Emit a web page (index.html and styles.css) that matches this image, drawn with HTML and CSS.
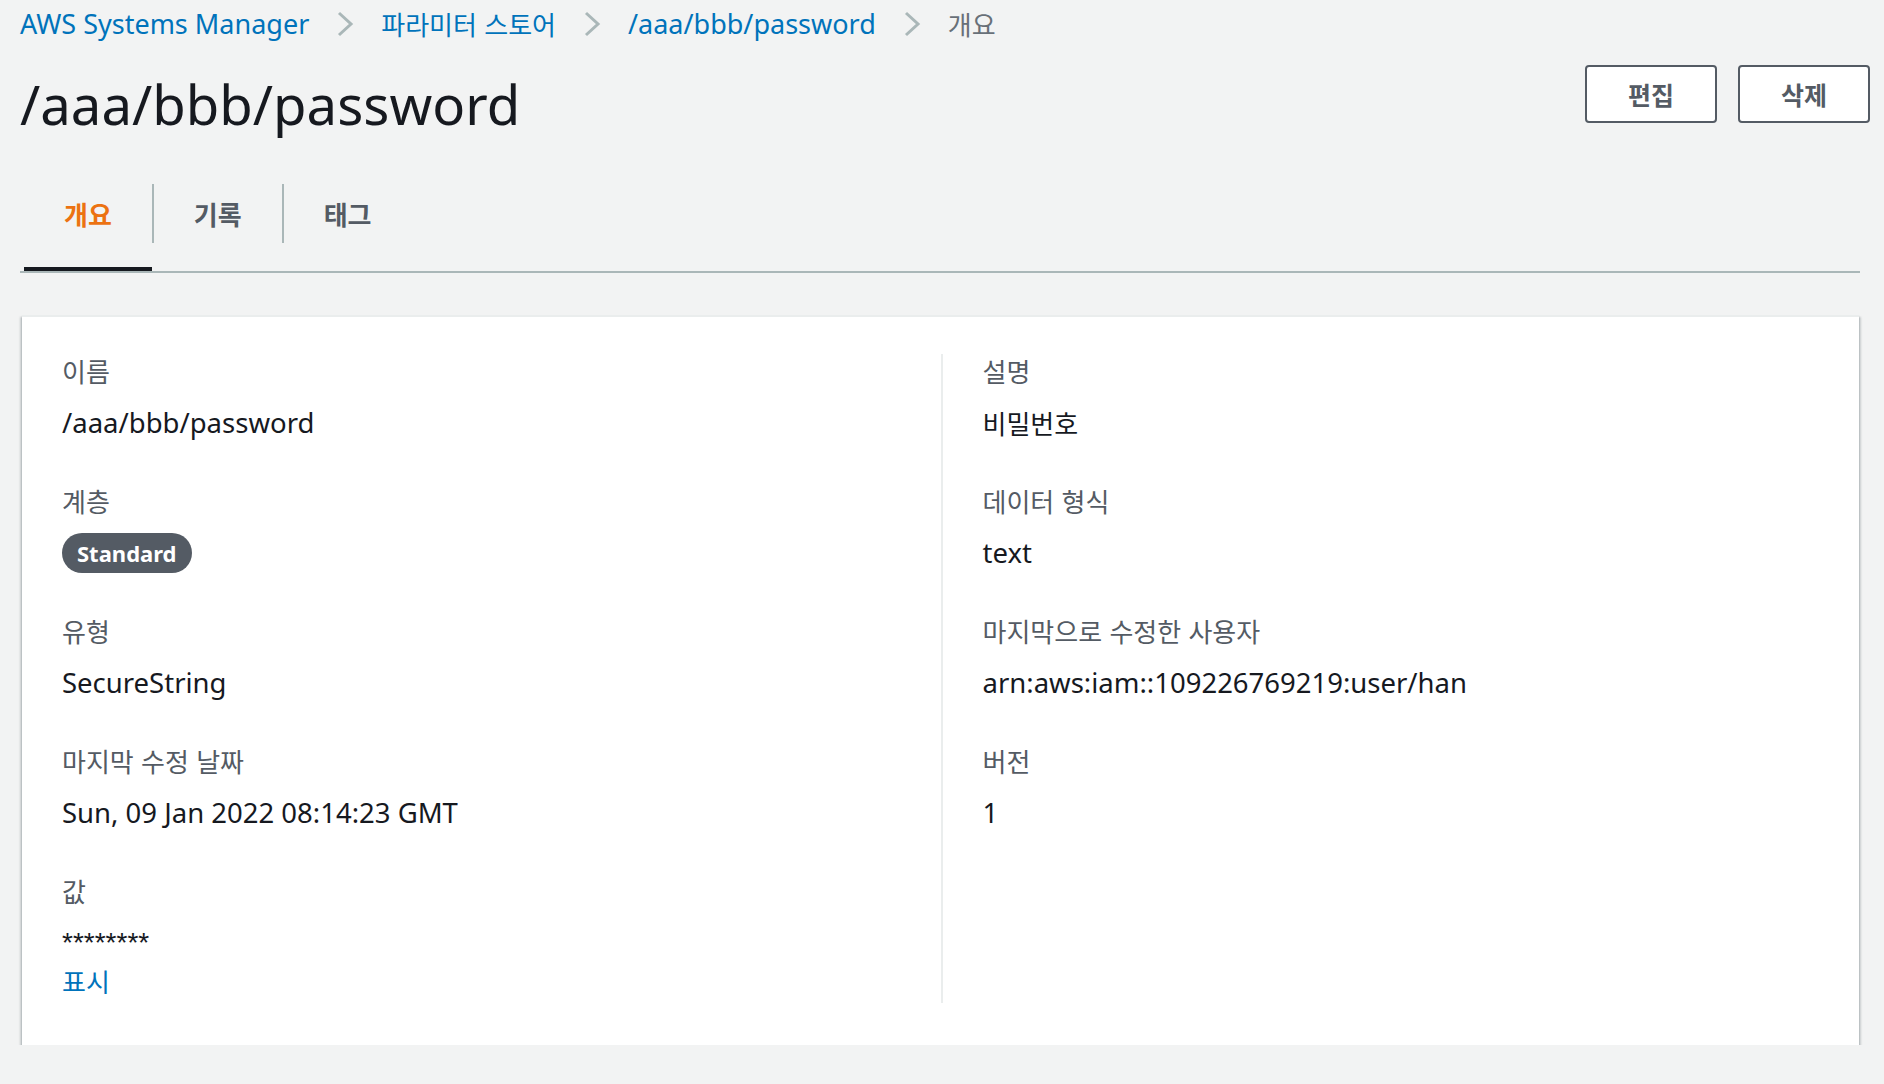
FILE: index.html
```html
<!DOCTYPE html>
<html lang="ko">
<head>
    <meta charset="UTF-8">
    <meta name="viewport" content="width=device-width, initial-scale=1.0">
    <title>/aaa/bbb/password | AWS Systems Manager</title>
    <link rel="stylesheet" href="styles.css">
</head>
<body>
    <div class="page">
        <nav class="breadcrumbs">
            <a href="#" class="crumb">AWS Systems Manager</a>
            <svg class="chevron" width="18" height="28" viewBox="0 0 18 28"><polyline points="3,3 15,14 3,25" /></svg>
            <a href="#" class="crumb ko">파라미터 스토어</a>
            <svg class="chevron" width="18" height="28" viewBox="0 0 18 28"><polyline points="3,3 15,14 3,25" /></svg>
            <a href="#" class="crumb">/aaa/bbb/password</a>
            <svg class="chevron" width="18" height="28" viewBox="0 0 18 28"><polyline points="3,3 15,14 3,25" /></svg>
            <span class="crumb crumb-current ko">개요</span>
        </nav>

        <header class="page-header">
            <h1 class="title">/aaa/bbb/password</h1>
            <div class="actions">
                <button class="btn ko">편집</button>
                <button class="btn ko">삭제</button>
            </div>
        </header>

        <ul class="tabs">
            <li class="tab active"><span class="tab-label ko">개요</span></li>
            <li class="tab"><span class="tab-label ko">기록</span></li>
            <li class="tab"><span class="tab-label ko">태그</span></li>
        </ul>

        <section class="card">
            <div class="card-grid">
                <div class="column">
                    <div class="field">
                        <div class="label ko">이름</div>
                        <div class="value">/aaa/bbb/password</div>
                    </div>
                    <div class="field">
                        <div class="label ko">계층</div>
                        <div class="value"><span class="badge">Standard</span></div>
                    </div>
                    <div class="field">
                        <div class="label ko">유형</div>
                        <div class="value">SecureString</div>
                    </div>
                    <div class="field">
                        <div class="label ko">마지막 수정 날짜</div>
                        <div class="value">Sun, 09 Jan 2022 08:14:23 GMT</div>
                    </div>
                    <div class="field">
                        <div class="label ko">값</div>
                        <div class="value masked">********</div>
                        <a href="#" class="value show-link ko">표시</a>
                    </div>
                </div>

                <div class="column column-right">
                    <div class="field">
                        <div class="label ko">설명</div>
                        <div class="value ko">비밀번호</div>
                    </div>
                    <div class="field">
                        <div class="label ko">데이터 형식</div>
                        <div class="value">text</div>
                    </div>
                    <div class="field">
                        <div class="label ko">마지막으로 수정한 사용자</div>
                        <div class="value">arn:aws:iam::109226769219:user/han</div>
                    </div>
                    <div class="field">
                        <div class="label ko">버전</div>
                        <div class="value">1</div>
                    </div>
                </div>
            </div>
        </section>
    </div>
</body>
</html>
```

FILE: styles.css
```css
:root {
    --bg: #f2f3f3;
    --link: #0073bb;
    --text: #16191f;
    --muted: #545b64;
    --grey: #687078;
    --line: #aab7b8;
    --divider: #eaeded;
    --orange: #ec7211;
}

* {
    margin: 0;
    padding: 0;
    box-sizing: border-box;
}

body {
    background-color: var(--bg);
    color: var(--text);
    font-family: "Noto Sans", "Noto Sans CJK KR", sans-serif;
    font-size: 27.5px;
}

.ko {
    font-family: "Noto Sans CJK KR", "Noto Sans", sans-serif;
    font-size: 26px;
}

.page {
    padding: 0 24px 0 20px;
}

/* breadcrumbs */
.breadcrumbs {
    display: flex;
    align-items: center;
    gap: 27px;
    height: 36px;
    margin-top: 6px;
}

.crumb {
    color: var(--link);
    text-decoration: none;
    font-size: 27px;
    line-height: 36px;
}

.crumb.ko {
    font-size: 26px;
}

.crumb-current {
    color: var(--grey);
}

.chevron polyline {
    fill: none;
    stroke: var(--line);
    stroke-width: 3;
}

/* header */
.page-header {
    display: flex;
    justify-content: space-between;
    align-items: flex-start;
    margin-top: 23px;
}

.title {
    font-size: 54.5px;
    font-weight: 400;
    line-height: 78px;
    color: var(--text);
}

.actions {
    display: flex;
    gap: 21px;
    margin-right: -10px;
}

.btn {
    width: 132px;
    height: 58px;
    background: #fff;
    border: 2px solid var(--muted);
    border-radius: 4px;
    color: var(--muted);
    font-size: 25px;
    font-weight: 700;
}

/* tabs */
.tabs {
    list-style: none;
    display: flex;
    margin-top: 12px;
    border-bottom: 2px solid var(--line);
}

.tab {
    padding: 29px 0 24px;
    border-bottom: 4px solid transparent;
}

.tab:first-child {
    margin-left: 4px;
}

.tab.active {
    border-bottom-color: var(--text);
}

.tab-label {
    display: block;
    line-height: 59px;
    padding: 0 40px;
    font-weight: 700;
    color: var(--muted);
}

.tab + .tab .tab-label {
    border-left: 2px solid var(--line);
}

.tab.active .tab-label {
    color: var(--orange);
}

/* card */
.card {
    margin: 42px 1px 0 2px;
    background: #fff;
    border-top: 2px solid var(--divider);
    padding: 37px 40px 42px;
    box-shadow: 0 2px 2px 0 rgba(0, 28, 36, 0.3), 2px 2px 2px 0 rgba(0, 28, 36, 0.15), -2px 2px 2px 0 rgba(0, 28, 36, 0.15);
}

.card-grid {
    display: grid;
    grid-template-columns: 1fr 1fr;
}

.column {
    padding-bottom: 4px;
}

.column-right {
    border-left: 2px solid var(--divider);
    padding-left: 40px;
}

.field {
    margin-bottom: 43px;
}

.field:last-child {
    margin-bottom: 0;
}

.label {
    color: var(--muted);
    line-height: 34px;
    margin-bottom: 17px;
}

.value {
    display: flex;
    align-items: center;
    height: 36px;
    line-height: 36px;
    color: var(--text);
}

.badge {
    display: inline-block;
    height: 40px;
    line-height: 40px;
    padding: 0 15px;
    border-radius: 20px;
    background: var(--muted);
    color: #fff;
    font-size: 22px;
    font-weight: 700;
}

.masked {
    font-family: "Liberation Sans", sans-serif;
    font-size: 28px;
}

.show-link {
    color: var(--link);
    text-decoration: none;
    margin-top: 2px;
}
```
